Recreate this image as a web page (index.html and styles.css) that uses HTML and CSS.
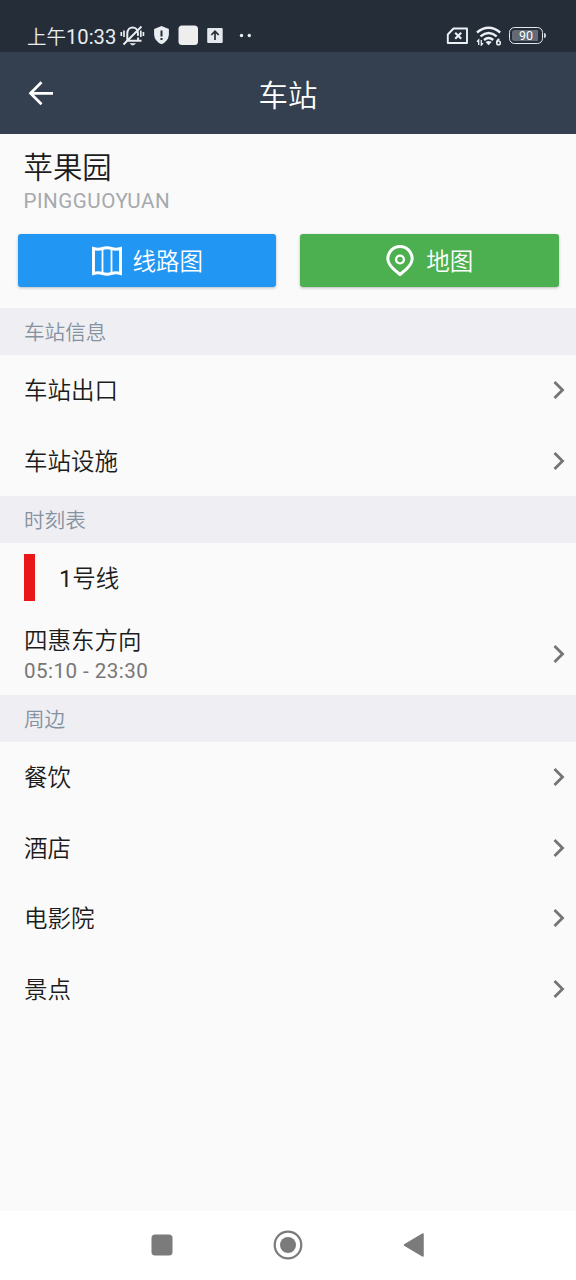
FILE: index.html
```html
<!DOCTYPE html>
<html lang="zh-CN">
<head>
<meta charset="utf-8">
<title>车站</title>
<link rel="stylesheet" href="styles.css">
</head>
<body>
<div class="screen">
  <div class="status">
    <span class="clock">上午<span class="time">10:33</span></span>
    <svg class="notices" width="134" height="24" viewBox="120 24 134 24">
      <g fill="none" stroke="#e9edf1" stroke-width="2">
        <path d="M126 40.800h15.500M127.3 39.5v-5.8c0-8.4 10.600-8.400 10.600 0l.1 2.200M138.100 37.500v3M141.500 26.500L123.500 44.500"/>
        <path stroke-width="1.700" d="M121.300 32v4M124 30.500v6.500M140.800 30.500v6.500M143.400 32v4"/>
      </g>
      <path fill="#e9edf1" d="M129.500 43.300h6.500q-3.200 4.200-6.500 0z"/>
      <path fill="#e9edf1" d="M161.500 26l7.400 3v5.500q-.4 6.800-7.400 9.700q-7-2.900-7.400-9.700V29z"/>
      <path stroke="#252d37" stroke-width="2" d="M161.500 30.500v6M161.500 38v2"/>
      <rect x="178.500" y="25.500" width="19.500" height="19.500" rx="3.500" fill="#eeeeee"/>
      <rect x="207.200" y="28" width="15.500" height="15" rx="1" fill="#e4e8ed"/>
      <path fill="none" stroke="#252d37" stroke-width="1.700" d="M215 40v-8.500M211.300 35l3.700-3.700l3.700 3.700"/>
      <circle cx="241.500" cy="35.500" r="1.700" fill="#e9edf1"/>
      <circle cx="249.300" cy="35.500" r="1.700" fill="#e9edf1"/>
    </svg>
    <svg class="sim" width="22" height="18" viewBox="446 27 22 18">
      <path fill="none" stroke="#edf1f5" stroke-width="1.900" stroke-linejoin="round" d="M453.500 28.500h13.500v14.500h-19.200v-8.500z"/>
      <path stroke="#edf1f5" stroke-width="2.100" d="M455.200 32.700l6 6M461.200 32.700l-6 6"/>
    </svg>
    <svg class="wifi" width="27" height="20" viewBox="475 26 27 20">
      <g fill="none" stroke="#edf1f5" stroke-width="2.400">
        <path d="M477 32.500q11.600-9.500 23.200 0M480.500 36.300q8.100-6.800 16.200 0M484 40q4.600-4 9.200 0"/>
        <path stroke-width="1.300" d="M478.700 45v-5l-1.700 1.800M481.300 40v5l1.700-1.800"/>
      </g>
      <path fill="#edf1f5" d="M485.600 42q3-2 6 0l-3 3.300z"/>
      <path fill="none" stroke="#edf1f5" stroke-width="1.500" d="M499.300 39q-2.600 1.200-2.600 3.700"/>
      <circle cx="498.500" cy="42.900" r="1.800" fill="none" stroke="#edf1f5" stroke-width="1.500"/>
    </svg>
    <div class="battery"><span class="level">90</span></div><i class="battery-tip"></i>
  </div>

  <header class="appbar">
    <svg class="back" width="28" height="28" viewBox="0 0 28 28"><path fill="none" stroke="#fff" stroke-width="2.700" d="M26 14.300H3.500M14.500 3.300L3.500 14.300l11 11"/></svg>
    <h1 class="title">车站</h1>
  </header>

  <main class="content">
    <section class="station">
      <h2 class="station-name">苹果园</h2>
      <p class="station-latin">PINGGUOYUAN</p>
      <div class="actions">
        <button class="btn btn-line">
          <svg width="32" height="32" viewBox="0 0 32 32"><path fill="none" stroke="#fff" stroke-width="2.900" d="M2.500 3.500Q7 5 11.500 3.500Q16 2 20.500 3.500Q25 5 29.500 3.500V28.500Q25 27 20.500 28.500Q16 30 11.500 28.500Q7 27 2.500 28.500Z"/><path stroke="#fff" stroke-width="1.800" d="M11.500 4v24M20.500 4v24"/></svg>
          <span>线路图</span>
        </button>
        <button class="btn btn-map">
          <svg width="32" height="32" viewBox="0 0 32 32"><path fill="none" stroke="#fff" stroke-width="3" stroke-linejoin="round" d="M16 29.500C12.500 26.500 3.800 21.300 3.800 13.800a12.200 12.200 0 0 1 24.400 0C28.200 21.300 19.500 26.500 16 29.500z"/><circle cx="16" cy="14.500" r="3.900" fill="none" stroke="#fff" stroke-width="2.400"/></svg>
          <span>地图</span>
        </button>
      </div>
    </section>

    <h3 class="divider">车站信息</h3>
    <a class="row"><span>车站出口</span><svg class="chevron" viewBox="0 0 12 20"><path d="M1.500 2l8 8l-8 8"/></svg></a>
    <a class="row"><span>车站设施</span><svg class="chevron" viewBox="0 0 12 20"><path d="M1.500 2l8 8l-8 8"/></svg></a>

    <h3 class="divider">时刻表</h3>
    <div class="line"><i class="line-color"></i><span class="line-name"><span class="num">1</span>号线</span></div>
    <a class="row direction">
      <span>四惠东方向<small class="hours">05:10 - 23:30</small></span>
      <svg class="chevron" viewBox="0 0 12 20"><path d="M1.500 2l8 8l-8 8"/></svg>
    </a>

    <h3 class="divider">周边</h3>
    <a class="row"><span>餐饮</span><svg class="chevron" viewBox="0 0 12 20"><path d="M1.500 2l8 8l-8 8"/></svg></a>
    <a class="row"><span>酒店</span><svg class="chevron" viewBox="0 0 12 20"><path d="M1.500 2l8 8l-8 8"/></svg></a>
    <a class="row"><span>电影院</span><svg class="chevron" viewBox="0 0 12 20"><path d="M1.500 2l8 8l-8 8"/></svg></a>
    <a class="row"><span>景点</span><svg class="chevron" viewBox="0 0 12 20"><path d="M1.500 2l8 8l-8 8"/></svg></a>
  </main>

  <nav class="navbar">
    <svg width="30" height="30" viewBox="0 0 30 30"><rect x="4.500" y="4.500" width="21" height="21" rx="3.500" fill="#7b7b7b"/></svg>
    <svg width="30" height="30" viewBox="0 0 30 30"><circle cx="15" cy="15" r="13.300" fill="none" stroke="#7b7b7b" stroke-width="2.200"/><circle cx="15" cy="15" r="8" fill="#7b7b7b"/></svg>
    <svg width="30" height="30" viewBox="0 0 30 30"><path d="M5.500 15L24 4v22z" fill="#7b7b7b" stroke="#7b7b7b" stroke-width="1.500" stroke-linejoin="round"/></svg>
  </nav>
</div>
</body>
</html>
```
FILE: styles.css
```css
* { box-sizing: border-box; }
body { margin: 0; font-family: Roboto, "Noto Sans CJK SC", sans-serif; font-weight: 350; color: #1c1c1c; }
h1, h2, h3, p { margin: 0; font-weight: inherit; }

.screen { display: flex; flex-direction: column; width: 576px; height: 1280px; background: #fafafa; overflow: hidden; }

.status { display: flex; align-items: center; height: 52px; padding: 20px 30px 0 27px; background: #252d38; color: #e9edf1; }
.clock { width: 93px; font-size: 19.5px; line-height: 32px; padding-top: 3px; white-space: nowrap; }
.time { font-size: 20.200px; font-weight: 400; }
.notices { flex: none; }
.sim { margin-left: auto; }
.wifi { margin-left: 7px; }
.battery { width: 34px; height: 17px; margin: -1px 0 0 7px; padding: 1.500px; border: 1.500px solid #e4e8ed; border-radius: 5.500px; }
.level { display: block; height: 11px; border-radius: 2.500px; background: linear-gradient(90deg, #646b76 88%, #252d38 88%); color: #fff; font-size: 12.500px; font-weight: 400; line-height: 12px; text-align: center; }
.battery-tip { width: 2px; height: 5px; margin: -1px 0 0 1px; border-radius: 0 2px 2px 0; background: #cfd4da; }

.appbar { display: grid; grid-template-columns: 1fr auto 1fr; align-items: center; height: 82px; padding: 0 27px; background: #34404f; color: #fff; }
.title { font-size: 29.400px; line-height: 44px; padding-top: 6px; }

.content { flex: 1; }
.station { height: 174px; padding: 12px 17.500px 0; }
.station-name { padding-left: 6px; font-size: 29.400px; line-height: 44px; }
.station-latin { margin-top: -1px; padding-left: 6px; font-size: 20.600px; font-weight: 400; line-height: 24px; letter-spacing: .5px; color: #a6a9ac; }
.actions { display: grid; grid-template-columns: 1fr 1fr; gap: 24px; margin-top: 21px; }
.btn { display: flex; align-items: center; justify-content: center; gap: 10px; height: 53px; padding: 0; border: 0; border-radius: 3px; color: #fff; font: inherit; font-size: 23.500px; box-shadow: 0 1px 3px rgba(0, 0, 0, .25); }
.btn span { padding-bottom: 1px; }
.btn-line { background: #2196f3; }
.btn-map { padding-right: 1px; background: #4caf50; }

.divider { height: 47px; padding-left: 24px; background: #eeeef3; color: #8592a0; font-size: 20.600px; line-height: 50px; }
.row { display: flex; align-items: center; justify-content: space-between; height: 70.500px; padding: 0 11px 0 24px; font-size: 23.500px; line-height: 37px; }
.row > span { padding-top: 3px; }
.chevron { width: 12px; height: 20px; fill: none; stroke: #747474; stroke-width: 2.800; }
.line { display: flex; align-items: center; gap: 24px; height: 69.500px; padding-left: 23.500px; font-size: 23.500px; }
.line-color { width: 11.500px; height: 47px; background: #e91717; }
.line-name { padding-bottom: 2px; }
.num { font-weight: 400; }
.direction { height: 82.500px; line-height: 35px; }
.direction > span { padding-top: 0; }
.hours { display: block; color: #777; font-size: 20.600px; font-weight: 400; line-height: 25px; letter-spacing: .45px; }

.navbar { display: flex; justify-content: center; gap: 96px; height: 69px; padding-top: 19px; background: #fff; }
```
